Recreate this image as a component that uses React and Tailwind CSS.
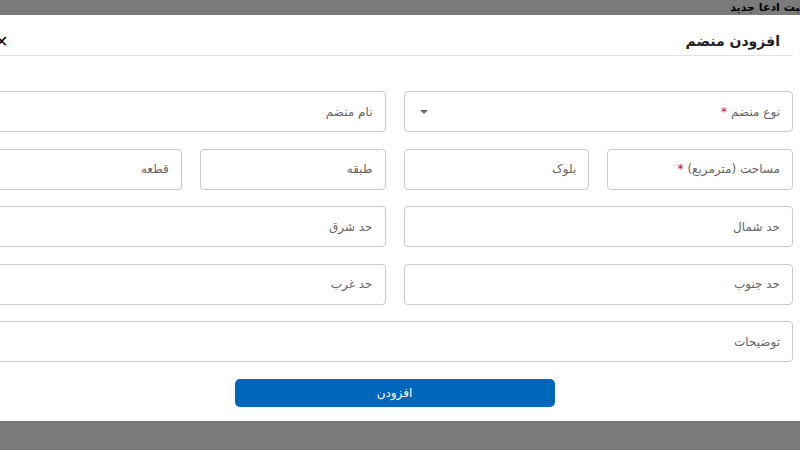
import React from 'react';

const Field = ({ label, required, select, className = '' }) => (
    <div className={`relative h-[41px] border border-[#c9c9c9] rounded-[4px] bg-white flex items-center px-3 ${className}`}>
        <span className="text-[12px] text-[#666]">
            {label}
            {required && <span className="text-[#d0021b] mr-1">*</span>}
        </span>
        {select && (
            <span className="mr-auto ml-[3px] w-0 h-0 border-l-[4px] border-r-[4px] border-t-[4px] border-l-transparent border-r-transparent border-t-[#666]"></span>
        )}
    </div>
);

export default function App() {
    return (
        <div dir="rtl" className="w-full h-[450px] bg-[#7a7a7a] overflow-hidden flex flex-col" style={{ fontFamily: '"DejaVu Sans", sans-serif' }}>
            {/* верхняя полоса */}
            <div className="h-[15px] flex items-center -mr-[4px]">
                <span className="text-[11px] font-bold text-black leading-none">ثبت ادعا جدید</span>
            </div>

            {/* модалка */}
            <div className="bg-white h-[406px] pr-[7px]">
                <div className="-ml-[4px] flex flex-col">
                    <div className="h-[41px] pt-[13px] flex items-center justify-between border-b border-[#e2e2e2] pr-[13px]">
                        <h2 className="text-[14px] font-bold text-[#222]">افزودن منضم</h2>
                        <span className="ml-[-1px] text-[16px] font-bold text-black leading-none">✕</span>
                    </div>

                    <div className="flex flex-col gap-[16.5px] mt-[35px]">
                        <div className="grid grid-cols-2 gap-[18px]">
                            <Field label="نوع منضم" required select />
                            <Field label="نام منضم" />
                        </div>
                        <div className="grid grid-cols-4 gap-[18px]">
                            <Field label="مساحت (مترمربع)" required />
                            <Field label="بلوک" />
                            <Field label="طبقه" />
                            <Field label="قطعه" />
                        </div>
                        <div className="grid grid-cols-2 gap-[18px]">
                            <Field label="حد شمال" />
                            <Field label="حد شرق" />
                        </div>
                        <div className="grid grid-cols-2 gap-[18px]">
                            <Field label="حد جنوب" />
                            <Field label="حد غرب" />
                        </div>
                        <Field label="توضیحات" />
                    </div>

                    <div className="flex justify-center mt-[17px]">
                        <button className="w-[320px] h-[28px] bg-[#0066bb] rounded-[5px] text-white text-[12px]">
                            افزودن
                        </button>
                    </div>
                </div>
            </div>
        </div>
    );
}
